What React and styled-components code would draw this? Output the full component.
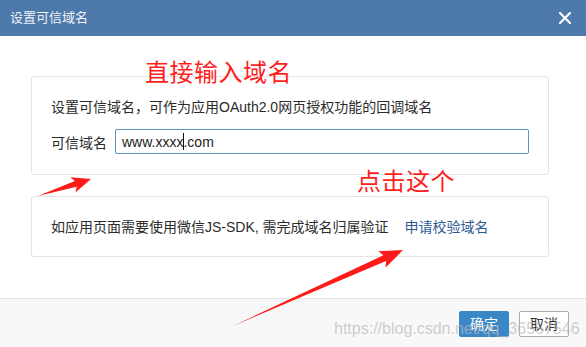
import React from "react";
import styled, { createGlobalStyle } from "styled-components";

const Global = createGlobalStyle`
  html, body { margin: 0; padding: 0; background: #ffffff; }
  body { font-family: "Liberation Sans", "Noto Sans CJK SC", sans-serif; }
  * { box-sizing: border-box; }
`;

const Dialog = styled.div`
  position: relative;
  width: 586px;
  height: 347px;
  display: flex;
  flex-direction: column;
  overflow: hidden;
  background: #ffffff;
  color: #333;
  font-size: 14px;
`;

const Header = styled.div`
  height: 36px;
  flex: none;
  background: #4e79ab;
  display: flex;
  align-items: center;
  justify-content: space-between;
  padding: 0 15px 0 10px;
`;

const Title = styled.div`
  color: #eef2f7;
  font-size: 13px;
  line-height: 36px;
`;

const Close = styled.div`
  width: 13px;
  height: 13px;
  display: flex;
  align-items: center;
  justify-content: center;
  color: #fff;
`;

const Body = styled.div`
  flex: 1;
  padding: 40px 37px 0 31px;
  display: flex;
  flex-direction: column;
  gap: 21px;
`;

const Card = styled.div`
  height: ${(p) => p.$h}px;
  border: 1px solid #e4e4e6;
  border-radius: 3px;
  background: #fff;
  padding: 20px 19px 0 19px;
  display: flex;
  flex-direction: column;
  gap: 12px;
`;

const Line = styled.div`
  line-height: 20px;
  height: 20px;
  color: #2b2b2b;
  white-space: nowrap;
  display: flex;
  align-items: center;
`;

const Row = styled.div`
  display: flex;
  align-items: center;
  gap: 8px;
`;

const Label = styled.span`
  color: #2b2b2b;
  width: 56px;
  white-space: nowrap;
`;

const Field = styled.div`
  flex: 1;
  height: 25px;
  border: 1px solid #5d8fc9;
  border-radius: 2px;
  padding: 0 6px;
  display: flex;
  align-items: center;
  font-size: 14px;
  color: #222;
  white-space: nowrap;
`;

const Caret = styled.span`
  display: inline-block;
  width: 1px;
  height: 17px;
  background: #111;
  margin: 0 -1px 0 0;
`;

const Link = styled.a`
  color: #2d5a96;
  text-decoration: none;
  margin-left: 16px;
`;

const Footer = styled.div`
  height: 49px;
  flex: none;
  background: #f8f8f8;
  border-top: 1px solid #e3e3e3;
  display: flex;
  justify-content: flex-end;
  align-items: flex-start;
  gap: 10px;
  padding: 12px 17px 0 0;
`;

const Button = styled.button`
  width: 50px;
  height: 26px;
  padding: 0;
  border-radius: 2px;
  font-family: "Liberation Sans", "Noto Sans CJK SC", sans-serif;
  font-size: 14px;
  line-height: 24px;
  cursor: pointer;
  border: 1px solid ${(p) => (p.$primary ? "#3a84c4" : "#adadad")};
  background: ${(p) => (p.$primary ? "#3a87c8" : "#ffffff")};
  color: ${(p) => (p.$primary ? "#ffffff" : "#333333")};
`;

const Note = styled.div`
  position: absolute;
  left: ${(p) => p.$x}px;
  top: ${(p) => p.$y}px;
  font-family: "Noto Sans CJK SC", sans-serif;
  font-size: 24px;
  line-height: 24px;
  letter-spacing: 0.5px;
  color: #ff1e1e;
  white-space: nowrap;
  pointer-events: none;
`;

const Arrows = styled.svg`
  position: absolute;
  left: 0;
  top: 0;
  pointer-events: none;
`;

const Watermark = styled.div`
  position: absolute;
  left: 334px;
  top: 319px;
  font-family: "Liberation Sans", sans-serif;
  font-size: 16px;
  line-height: 20px;
  color: rgba(185, 185, 185, 0.7);
  white-space: nowrap;
  pointer-events: none;
`;

function arrow(x1, y1, x2, y2, headLen, headHalf, neckHalf) {
  const dx = x2 - x1;
  const dy = y2 - y1;
  const len = Math.hypot(dx, dy);
  const ux = dx / len;
  const uy = dy / len;
  const nx = -uy;
  const ny = ux;
  const neckX = x2 - ux * headLen;
  const neckY = y2 - uy * headLen;
  const backX = neckX - ux * 3;
  const backY = neckY - uy * 3;
  const pts = [
    [x1, y1],
    [neckX - nx * neckHalf, neckY - ny * neckHalf],
    [backX - nx * headHalf, backY - ny * headHalf],
    [x2, y2],
    [backX + nx * headHalf, backY + ny * headHalf],
    [neckX + nx * neckHalf, neckY + ny * neckHalf],
  ];
  return pts.map((p) => p.map((v) => v.toFixed(1)).join(",")).join(" ");
}

export default function App() {
  return (
    <>
      <Global />
      <Dialog>
        <Header>
          <Title>设置可信域名</Title>
          <Close>
            <svg width="12" height="12" viewBox="0 0 12 12">
              <path d="M1 1L11 11M11 1L1 11" stroke="#fff" strokeWidth="2.2" strokeLinecap="square" />
            </svg>
          </Close>
        </Header>
        <Body>
          <Card $h={99}>
            <Line>设置可信域名，可作为应用OAuth2.0网页授权功能的回调域名</Line>
            <Row>
              <Label>可信域名</Label>
              <Field>
                www.xxxx<Caret />.com
              </Field>
            </Row>
          </Card>
          <Card $h={61}>
            <Line>
              如应用页面需要使用微信JS-SDK, 需完成域名归属验证
              <Link href="#">申请校验域名</Link>
            </Line>
          </Card>
        </Body>
        <Footer>
          <Button $primary>确定</Button>
          <Button>取消</Button>
        </Footer>

        <Note $x={145} $y={59}>直接输入域名</Note>
        <Note $x={357} $y={168}>点击这个</Note>
        <Arrows width="586" height="347" viewBox="0 0 586 347">
          <polygon points={arrow(38, 196, 91, 179, 16, 8, 3)} fill="#ff1a1a" />
          <polygon points={arrow(233, 326, 403, 250, 20, 9, 3.2)} fill="#ff1a1a" />
        </Arrows>
        <Watermark>https://blog.csdn.net/qq_36557546</Watermark>
      </Dialog>
    </>
  );
}
